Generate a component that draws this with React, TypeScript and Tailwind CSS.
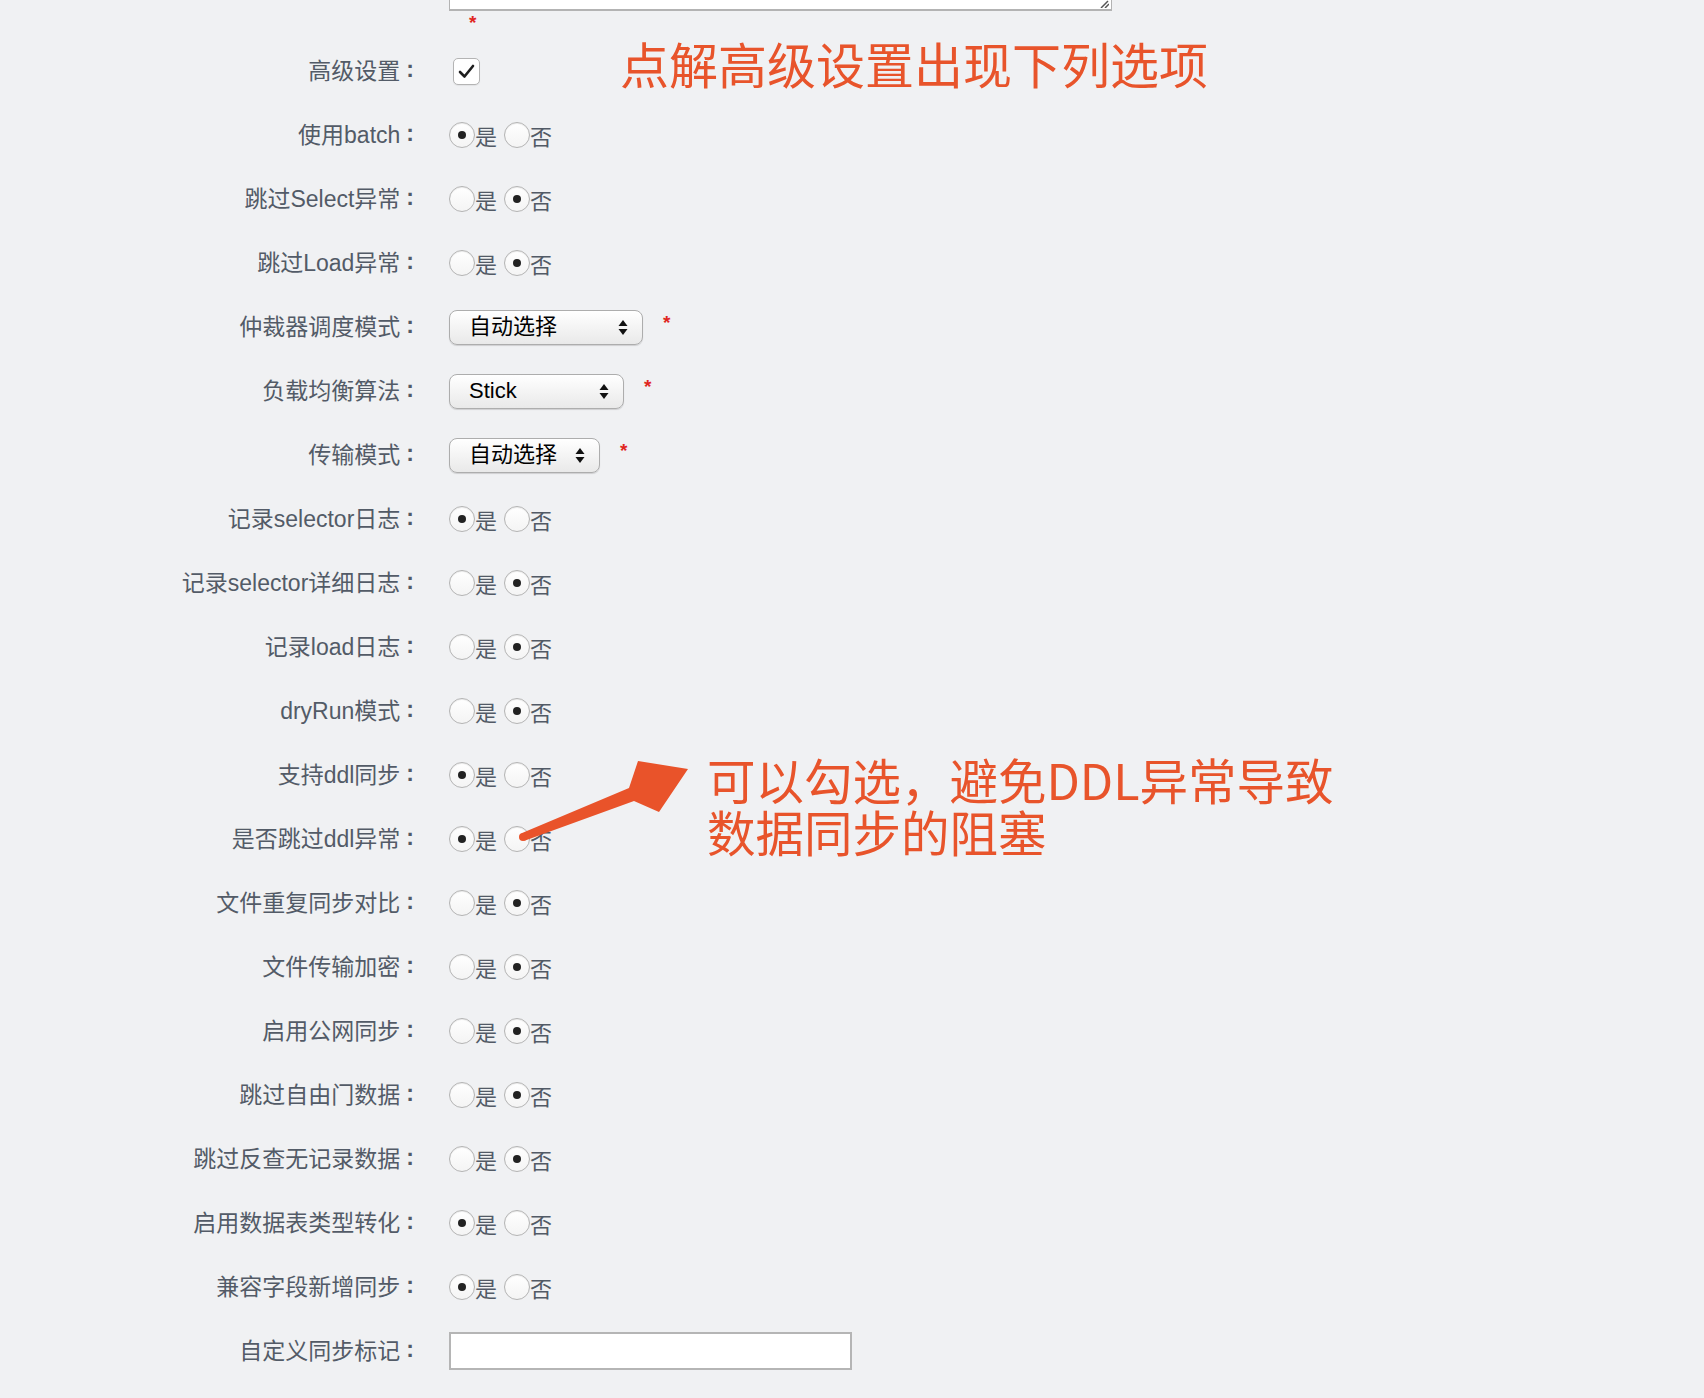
import React from "react";

type Row =
  | { label: string; kind: "check" }
  | { label: string; kind: "radio"; yes: boolean }
  | { label: string; kind: "select"; value: string; width: number }
  | { label: string; kind: "input" };

const rows: Row[] = [
  { label: "高级设置", kind: "check" },
  { label: "使用batch", kind: "radio", yes: true },
  { label: "跳过Select异常", kind: "radio", yes: false },
  { label: "跳过Load异常", kind: "radio", yes: false },
  { label: "仲裁器调度模式", kind: "select", value: "自动选择", width: 194 },
  { label: "负载均衡算法", kind: "select", value: "Stick", width: 175 },
  { label: "传输模式", kind: "select", value: "自动选择", width: 151 },
  { label: "记录selector日志", kind: "radio", yes: true },
  { label: "记录selector详细日志", kind: "radio", yes: false },
  { label: "记录load日志", kind: "radio", yes: false },
  { label: "dryRun模式", kind: "radio", yes: false },
  { label: "支持ddl同步", kind: "radio", yes: true },
  { label: "是否跳过ddl异常", kind: "radio", yes: true },
  { label: "文件重复同步对比", kind: "radio", yes: false },
  { label: "文件传输加密", kind: "radio", yes: false },
  { label: "启用公网同步", kind: "radio", yes: false },
  { label: "跳过自由门数据", kind: "radio", yes: false },
  { label: "跳过反查无记录数据", kind: "radio", yes: false },
  { label: "启用数据表类型转化", kind: "radio", yes: true },
  { label: "兼容字段新增同步", kind: "radio", yes: true },
  { label: "自定义同步标记", kind: "input" },
];

const FONT = { fontFamily: '"Liberation Sans", "Noto Sans CJK SC", sans-serif' };
const CJK = { fontFamily: '"Noto Sans CJK SC", sans-serif' };

function Radio({ on }: { on: boolean }) {
  return (
    <span className="flex h-[26px] w-[26px] shrink-0 items-center justify-center rounded-full border border-[#b4b4b4] bg-gradient-to-b from-white to-[#f4f4f4] shadow-[inset_0_1px_1px_rgba(0,0,0,0.08)]">
      {on && <span className="h-[8px] w-[8px] rounded-full bg-[#222]" />}
    </span>
  );
}

function RadioGroup({ yes }: { yes: boolean }) {
  return (
    <div className="flex items-center text-[22px] leading-none text-[#525a66]" style={CJK}>
      <Radio on={yes} />
      <span>是</span>
      <span className="ml-[7px]">
        <Radio on={!yes} />
      </span>
      <span>否</span>
    </div>
  );
}

function SelectBox({ value, width }: { value: string; width: number }) {
  return (
    <div className="flex items-center">
      <div
        className="flex h-[35px] items-center justify-between rounded-[8px] border border-[#adadad] bg-gradient-to-b from-white to-[#e9e9e9] pl-[19px] pr-[14px] text-[22px] leading-none text-black shadow-[0_1px_1px_rgba(0,0,0,0.14)]"
        style={{ ...FONT, width }}
      >
        <span>{value}</span>
        <svg width="10" height="15" viewBox="0 0 10 15">
          <path d="M5 0 L9.5 6 H0.5 Z" fill="#111" />
          <path d="M0.5 9 H9.5 L5 15 Z" fill="#111" />
        </svg>
      </div>
      <span className="ml-[20px] -mt-[8px] text-[19px] font-bold text-[#e0261f]" style={FONT}>
        *
      </span>
    </div>
  );
}

function CheckBox() {
  return (
    <div className="ml-[4px] flex h-[27px] w-[27px] items-center justify-center rounded-[5px] border border-[#b4b4b4] bg-white shadow-[0_1px_1px_rgba(0,0,0,0.06)]">
      <svg width="17" height="15" viewBox="0 0 17 15">
        <path d="M2 8 L6.5 12.5 L15 2" fill="none" stroke="#1e1e1e" strokeWidth="2.6" strokeLinecap="round" strokeLinejoin="round" />
      </svg>
    </div>
  );
}

export default function App() {
  return (
    <div className="relative min-h-[1398px] w-full overflow-hidden bg-[#f0f1f3]" style={FONT}>
      {/* textarea bottom */}
      <div className="relative ml-[449px] h-[11px] w-[663px] border-x border-b-2 border-[#b3b3b3] bg-white">
        <svg className="absolute bottom-[1px] right-[2px]" width="12" height="9" viewBox="0 0 12 9">
          <path d="M4 9 L11 2" stroke="#555" strokeWidth="1.5" />
          <path d="M8 9 L12 5" stroke="#555" strokeWidth="1.5" />
        </svg>
      </div>
      <div className="h-[28px] pl-[469px] pt-[2px] text-[19px] font-bold leading-none text-[#e0261f]">*</div>

      <div className="grid grid-cols-[414px_1fr] gap-x-[35px]">
        {rows.map((r, i) => (
          <React.Fragment key={i}>
            <div className="flex h-[64px] items-center justify-end text-[23px] leading-none text-[#535b67]">
              <span>{r.label}</span>
              <span className="relative -top-[2px] ml-[6px] font-bold">:</span>
            </div>
            <div className="flex h-[64px] items-center">
              {r.kind === "check" && <CheckBox />}
              {r.kind === "radio" && <RadioGroup yes={r.yes} />}
              {r.kind === "select" && <SelectBox value={r.value} width={r.width} />}
              {r.kind === "input" && (
                <div className="h-[38px] w-[403px] border-2 border-[#b5b5b5] bg-white" />
              )}
            </div>
          </React.Fragment>
        ))}
      </div>

      {/* annotation 1 */}
      <div
        className="absolute left-[620px] top-[37px] whitespace-nowrap text-[49px] leading-[52px] text-[#e8542b]"
        style={CJK}
      >
        点解高级设置出现下列选项
      </div>

      {/* annotation 2 */}
      <div
        className="absolute left-[707px] top-[753px] whitespace-nowrap text-[48.5px] leading-[52px] text-[#e8542b]"
        style={CJK}
      >
        <div>可以勾选，避免DDL异常导致</div>
        <div>数据同步的阻塞</div>
      </div>

      {/* arrow */}
      <svg className="pointer-events-none absolute left-0 top-0" width="1704" height="1398" viewBox="0 0 1704 1398">
        <polygon
          points="521.5,833.3 629,788 638,761 688,769 659,812 634,801 524.5,840.7"
          fill="#e9532a"
        />
        <circle cx="523" cy="837" r="4" fill="#e9532a" />
      </svg>
    </div>
  );
}
